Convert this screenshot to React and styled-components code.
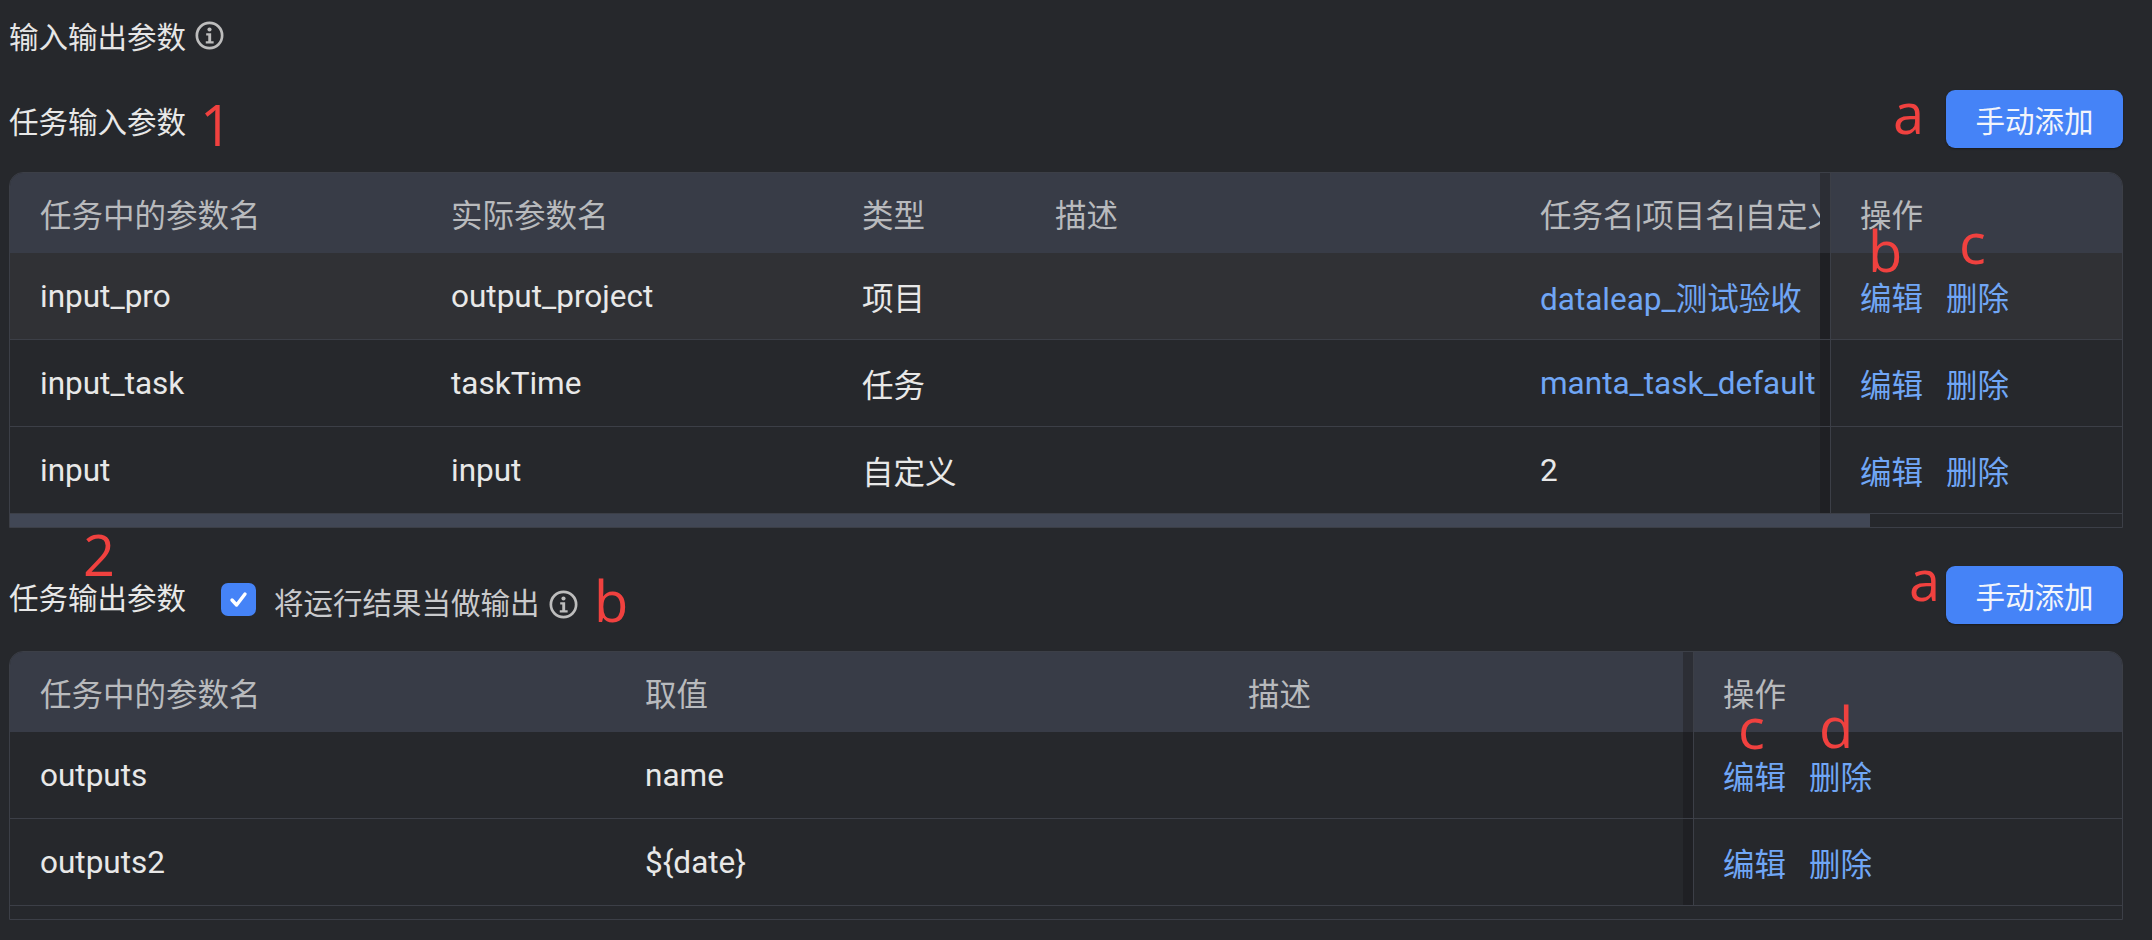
import React from "react";
import styled, { createGlobalStyle } from "styled-components";

const GlobalStyle = createGlobalStyle`
  html, body {
    margin: 0;
    background: #26282c;
  }
  body {
    font-family: Roboto, "Noto Sans CJK SC", sans-serif;
    color: #e8e8e8;
  }
`;

const Page = styled.div`
  position: relative;
  width: 2152px;
  height: 940px;
  box-sizing: border-box;
  padding: 13px 29px 0 9px;
  overflow: hidden;
`;

const Heading = styled.div`
  display: flex;
  align-items: center;
  gap: 9px;
  height: 44px;
  font-size: 29.5px;
  color: #e6e6e6;
`;

const SectionBar = styled.div`
  display: flex;
  align-items: center;
  justify-content: space-between;
  height: 58px;
  margin-top: ${(p) => p.$top}px;
  margin-bottom: ${(p) => p.$bottom}px;
`;

const SectionLabel = styled.div`
  display: flex;
  align-items: center;
  font-size: 29.5px;
  line-height: 40px;
  color: #e8e8e8;
  padding-top: 8px;
`;

const CheckGroup = styled.label`
  display: flex;
  align-items: center;
  margin-left: 35px;
  margin-top: 10px;
  font-size: 29.5px;
  color: #c9cacc;
`;

const CheckBox = styled.span`
  display: flex;
  align-items: center;
  justify-content: center;
  width: 35px;
  height: 33px;
  border-radius: 7px;
  background: #4583f7;
  margin-right: 18px;
  margin-top: -10px;
`;

const InfoWrap = styled.span`
  display: inline-flex;
  margin-left: ${(p) => p.$left || 0}px;
`;

const AddButton = styled.button`
  width: 177px;
  height: 58px;
  border: none;
  border-radius: 9px;
  background: #4583f7;
  box-shadow: 0 1px 2px rgba(0, 0, 0, 0.35);
  color: #f2f5fb;
  font-family: inherit;
  font-size: 29.5px;
  padding: 0;
`;

const Frame = styled.div`
  border: 1px solid #3c3f47;
  border-radius: 14px 14px 0 0;
  overflow: hidden;
`;

const Row = styled.div`
  display: flex;
  height: ${(p) => (p.$head ? 80 : 87)}px;
  box-sizing: border-box;
  background: ${(p) => (p.$head ? "#383c47" : p.$hover ? "#303135" : "#26282c")};
  color: ${(p) => (p.$head ? "#b8babd" : "#e8e8e8")};
  border-bottom: ${(p) => (p.$head ? "none" : "1px solid #3c3f47")};
  font-size: 31.5px;
`;

const Cell = styled.div`
  width: ${(p) => p.$w}px;
  flex: none;
  box-sizing: border-box;
  display: flex;
  align-items: center;
  padding-left: 30px;
  white-space: nowrap;
  overflow: hidden;
`;

const LinkText = styled.span`
  color: #70a6f5;
`;

const ActionCell = styled.div`
  flex: 1;
  position: relative;
  display: flex;
  align-items: center;
  gap: 23px;
  padding-left: 29px;
  border-left: 1px solid #3c3f47;
  box-shadow: -10px 0 0 ${(p) => (p.$head ? "#2c2e35" : "#1f2024")};
`;

const ScrollTrack = styled.div`
  height: 13px;
`;

const ScrollThumb = styled.div`
  height: 100%;
  width: ${(p) => p.$w}px;
  background: #414755;
`;

const Mark = styled.span`
  position: absolute;
  left: ${(p) => p.$x}px;
  top: ${(p) => p.$y}px;
  font-size: 56px;
  line-height: 56px;
  color: #f0413f;
  font-family: "Open Sans", sans-serif;
`;

const InfoIcon = () => (
  <svg width="29" height="29" viewBox="0 0 28 28" fill="none">
    <circle cx="14" cy="14" r="12.2" stroke="#bdbdbd" strokeWidth="2.6" />
    <circle cx="14" cy="8.2" r="2" fill="#bdbdbd" />
    <path d="M10.8 11.8h4.8v7.8H18v2.2h-7.6v-2.2h2.4v-5.6h-2z" fill="#bdbdbd" />
  </svg>
);

const Check = () => (
  <svg width="21" height="19" viewBox="0 0 21 19" fill="none">
    <path d="M4 10l4.6 5L17 4" stroke="#fff" strokeWidth="3.4" strokeLinecap="round" strokeLinejoin="round" />
  </svg>
);

const Actions = () => (
  <>
    <LinkText>编辑</LinkText>
    <LinkText>删除</LinkText>
  </>
);

const inputCols = [411, 411, 193, 485, 320];
const inputHead = ["任务中的参数名", "实际参数名", "类型", "描述", "任务名|项目名|自定义"];
const inputRows = [
  ["input_pro", "output_project", "项目", "", <LinkText>dataleap_测试验收</LinkText>],
  ["input_task", "taskTime", "任务", "", <LinkText>manta_task_default</LinkText>],
  ["input", "input", "自定义", "", "2"],
];

const outputCols = [605, 603, 475];
const outputHead = ["任务中的参数名", "取值", "描述"];
const outputRows = [
  ["outputs", "name", ""],
  ["outputs2", "${date}", ""],
];

const ParamTable = ({ cols, head, rows, thumb, hoverRow }) => (
  <Frame>
    <Row $head>
      {head.map((h, i) => (
        <Cell key={i} $w={cols[i]}>{h}</Cell>
      ))}
      <ActionCell $head>操作</ActionCell>
    </Row>
    {rows.map((r, n) => (
      <Row key={n} $hover={n === hoverRow}>
        {r.map((c, i) => (
          <Cell key={i} $w={cols[i]}>{c}</Cell>
        ))}
        <ActionCell><Actions /></ActionCell>
      </Row>
    ))}
    <ScrollTrack>{thumb ? <ScrollThumb $w={thumb} /> : null}</ScrollTrack>
  </Frame>
);

export default function App() {
  return (
    <Page>
      <GlobalStyle />
      <Heading>
        输入输出参数
        <InfoIcon />
      </Heading>

      <SectionBar $top={33} $bottom={24}>
        <SectionLabel>任务输入参数</SectionLabel>
        <AddButton>手动添加</AddButton>
      </SectionBar>
      <ParamTable cols={inputCols} head={inputHead} rows={inputRows} thumb={1860} hoverRow={0} />

      <SectionBar $top={38} $bottom={27}>
        <SectionLabel>
          任务输出参数
          <CheckGroup>
            <CheckBox><Check /></CheckBox>
            将运行结果当做输出
            <InfoWrap $left={9}><InfoIcon /></InfoWrap>
          </CheckGroup>
        </SectionLabel>
        <AddButton>手动添加</AddButton>
      </SectionBar>
      <ParamTable cols={outputCols} head={outputHead} rows={outputRows} />

      <Mark $x={200} $y={96}>1</Mark>
      <Mark $x={1893} $y={84}>a</Mark>
      <Mark $x={1868} $y={222}>b</Mark>
      <Mark $x={1959} $y={214}>c</Mark>
      <Mark $x={83} $y={526}>2</Mark>
      <Mark $x={594} $y={572}>b</Mark>
      <Mark $x={1909} $y={551}>a</Mark>
      <Mark $x={1738} $y={699}>c</Mark>
      <Mark $x={1819} $y={698}>d</Mark>
    </Page>
  );
}
